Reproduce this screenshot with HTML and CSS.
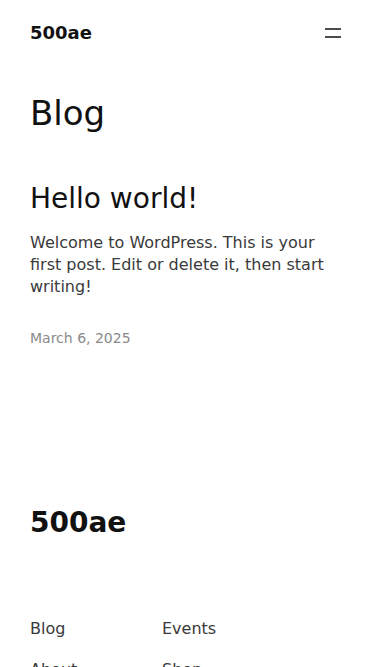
FILE: index.html
```html
<!DOCTYPE html>
<html lang="en">
<head>
<meta charset="utf-8">
<title>Blog – 500ae</title>
<link rel="stylesheet" href="styles.css">
</head>
<body>
<header class="site-header">
  <a class="site-title" href="#">500ae</a>
  <button class="menu-btn" aria-label="Open menu">
    <svg width="16" height="24" viewBox="0 0 16 24" aria-hidden="true"><path d="M0 7.3h16v1.4H0zM0 15.3h16v1.4H0z" fill="#111"/></svg>
  </button>
</header>
<main class="main">
  <h1 class="page-title">Blog</h1>
  <article class="post">
    <h2 class="post-title">Hello world!</h2>
    <p class="excerpt">Welcome to WordPress. This is your first post. Edit or delete it, then start writing!</p>
    <time class="post-date">March 6, 2025</time>
  </article>
</main>
<footer class="site-footer">
  <div class="footer-title">500ae</div>
  <nav class="footer-nav">
    <a href="#">Blog</a>
    <a href="#">Events</a>
    <a href="#">About</a>
    <a href="#">Shop</a>
  </nav>
</footer>
</body>
</html>
```
FILE: styles.css
```css
html, body { margin: 0; padding: 0; }
body {
  font-family: "DejaVu Sans", sans-serif;
  color: #111;
  background: #fff;
}
a { color: inherit; text-decoration: none; }
.site-header {
  display: flex;
  justify-content: space-between;
  align-items: center;
  padding: 20px 34px 0 30px;
  height: 26px;
}
.site-title {
  font-size: 18px;
  font-weight: 700;
  line-height: 26px;
}
.menu-btn {
  border: 0;
  background: none;
  padding: 0;
  width: 16px;
  height: 24px;
  display: block;
}
.menu-btn svg { display: block; }
.main { padding: 0 30px; }
.page-title {
  font-size: 34px;
  font-weight: 400;
  line-height: 1.2;
  margin: 47px 0 0 0;
}
.post { margin-top: 48px; }
.post-title {
  font-size: 28px;
  font-weight: 400;
  line-height: 1.2;
  margin: 0;
}
.excerpt {
  font-size: 16px;
  font-weight: 400;
  line-height: 22px;
  color: #3a3a3a;
  margin: 17px 0 0 0;
}
.post-date {
  display: block;
  font-size: 14px;
  line-height: 1.2;
  font-weight: 400;
  color: #8a8a8a;
  margin-top: 32px;
}
.site-footer { padding: 0 30px; margin-top: 159px; }
.footer-title {
  font-size: 28px;
  font-weight: 700;
  line-height: 1.2;
}
.footer-nav {
  display: grid;
  grid-template-columns: 132px 132px;
  row-gap: 22px;
  margin-top: 79px;
  font-size: 16px;
  line-height: 1.2;
  font-weight: 400;
  color: #3a3a3a;
}
```
